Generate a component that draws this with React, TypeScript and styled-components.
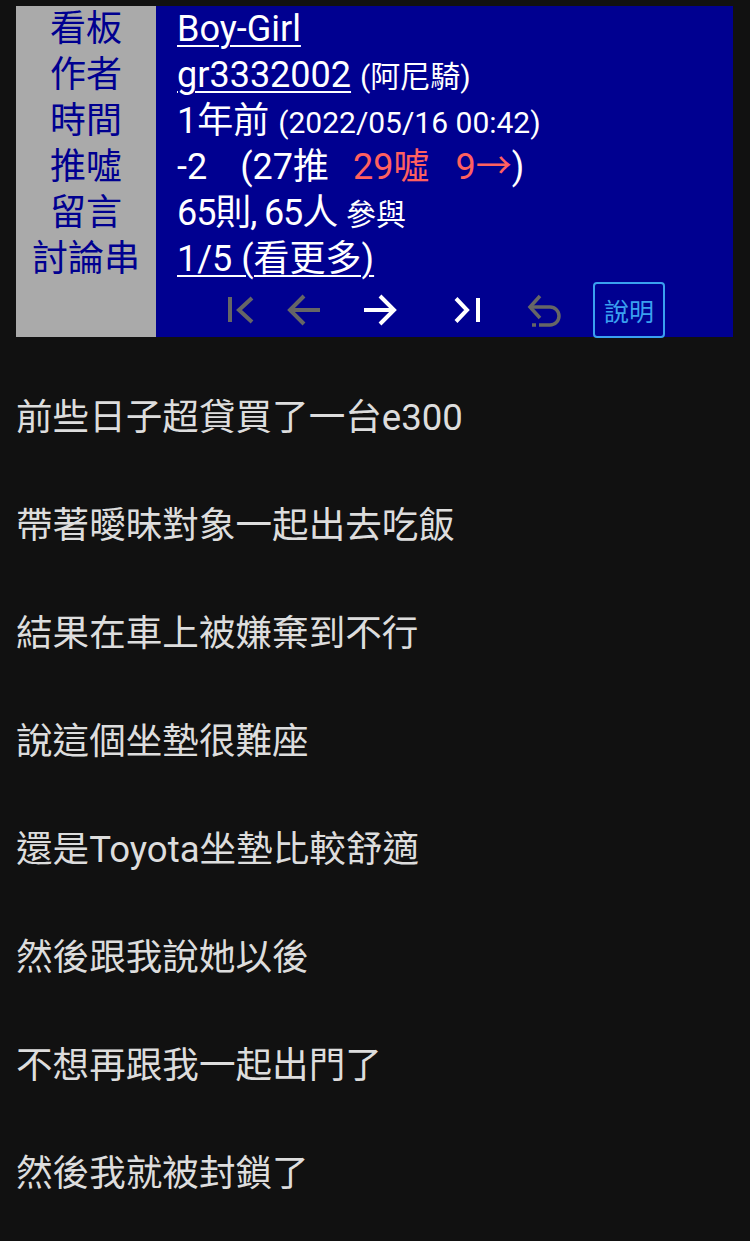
import React from "react";
import styled, { createGlobalStyle } from "styled-components";

const GlobalStyle = createGlobalStyle`
  html, body {
    margin: 0;
    padding: 0;
    background: #111111;
  }
  body {
    font-family: Roboto, "Noto Sans CJK TC", sans-serif;
  }
`;

const Page = styled.div`
  padding: 6px 17px 40px 16px;
  font-family: Roboto, "Noto Sans CJK TC", sans-serif;
`;

const InfoTable = styled.div`
  display: flex;
  font-size: 36px;
  line-height: 46px;
`;

const LabelCol = styled.div`
  width: 140px;
  background: #aaaaaa;
  display: flex;
  flex-direction: column;
`;

const Label = styled.div`
  color: #000090;
  text-align: center;
  height: 46px;
`;

const ValueCol = styled.div`
  flex: 1;
  background: #000090;
  color: #ffffff;
  padding-left: 21px;
  display: flex;
  flex-direction: column;
`;

const Value = styled.div`
  height: 46px;
  white-space: nowrap;
`;

const Link = styled.a`
  color: #ffffff;
  text-decoration: underline;
  text-underline-offset: 4px;
  text-decoration-thickness: 2px;
`;

const Small = styled.span`
  font-size: 30px;
`;

const Tight = styled.span`
  letter-spacing: -1.1px;
`;

const Count = styled.span<{ $red?: boolean; $gap?: number }>`
  color: ${(p) => (p.$red ? "#ff6060" : "#ffffff")};
  margin-left: ${(p) => p.$gap ?? 0}px;
`;

const NavRow = styled.div`
  height: 55px;
  display: flex;
  align-items: center;
  padding-left: 43px;
`;

const NavIcon = styled.svg<{ $gap: number }>`
  width: 40px;
  height: 40px;
  margin-left: ${(p) => p.$gap}px;
  flex: none;
  fill: none;
  stroke-linecap: butt;
  stroke-linejoin: miter;
`;

const HelpButton = styled.div`
  margin-left: 28px;
  width: 68px;
  height: 52px;
  border: 2px solid #3aa0f0;
  border-radius: 4px;
  color: #3aa0f0;
  font-size: 25px;
  line-height: 52px;
  text-align: center;
  font-family: "Noto Sans CJK TC", sans-serif;
`;

const Article = styled.div`
  color: #dddddd;
  font-size: 36.6px;
  line-height: 54px;
`;

const Para = styled.div`
  margin-top: 54px;
  white-space: nowrap;
`;

const GRAY = "#666666";

const lines = [
  "前些日子超貸買了一台e300",
  "帶著曖昧對象一起出去吃飯",
  "結果在車上被嫌棄到不行",
  "說這個坐墊很難座",
  "還是Toyota坐墊比較舒適",
  "然後跟我說她以後",
  "不想再跟我一起出門了",
  "然後我就被封鎖了",
];

export default function App() {
  return (
    <>
      <GlobalStyle />
      <Page>
        <InfoTable>
          <LabelCol>
            <Label>看板</Label>
            <Label>作者</Label>
            <Label>時間</Label>
            <Label>推噓</Label>
            <Label>留言</Label>
            <Label>討論串</Label>
          </LabelCol>
          <ValueCol>
            <Value>
              <Link>Boy-Girl</Link>
            </Value>
            <Value>
              <Link>gr3332002</Link> <Small>(阿尼騎)</Small>
            </Value>
            <Value>
              1年前 <Small>(2022/05/16 00:42)</Small>
            </Value>
            <Value>
              -2
              <Count $gap={33}>(27推</Count>
              <Count $red $gap={24}>29噓</Count>
              <Count $red $gap={26}>9→</Count>
              <Count>)</Count>
            </Value>
            <Value>
              <Tight>65則, 65人</Tight> <Small>參與</Small>
            </Value>
            <Value>
              <Link>1/5 (看更多)</Link>
            </Value>
            <NavRow>
              <NavIcon $gap={0} viewBox="0 0 40 40">
                <path d="M10 7 V32" stroke={GRAY} strokeWidth="4" />
                <path d="M32 8 L19 20 L32 32" stroke={GRAY} strokeWidth="4" />
              </NavIcon>
              <NavIcon $gap={24} viewBox="0 0 40 40">
                <path d="M6 20 H36" stroke={GRAY} strokeWidth="4" />
                <path d="M20 6 L6 20 L20 34" stroke={GRAY} strokeWidth="4" />
              </NavIcon>
              <NavIcon $gap={35} viewBox="0 0 40 40">
                <path d="M5 20 H35" stroke="#ffffff" strokeWidth="4" />
                <path d="M21 6 L35 20 L21 34" stroke="#ffffff" strokeWidth="4" />
              </NavIcon>
              <NavIcon $gap={49} viewBox="0 0 40 40">
                <path d="M8 8.5 L19 20 L8 31.5" stroke="#ffffff" strokeWidth="4" />
                <path d="M30 8 V32" stroke="#ffffff" strokeWidth="4" />
              </NavIcon>
              <NavIcon $gap={37} viewBox="0 0 40 40">
                <path d="M15 6 L5 17 L15 28" stroke={GRAY} strokeWidth="3.5" />
                <path
                  d="M6 17 H25 A9 9 0 0 1 25 35 H14"
                  stroke={GRAY}
                  strokeWidth="3.5"
                />
                <path d="M7 35 H11" stroke={GRAY} strokeWidth="3.5" />
              </NavIcon>
              <HelpButton>說明</HelpButton>
            </NavRow>
          </ValueCol>
        </InfoTable>
        <Article>
          {lines.map((l, i) => (
            <Para key={i}>{l}</Para>
          ))}
        </Article>
      </Page>
    </>
  );
}
